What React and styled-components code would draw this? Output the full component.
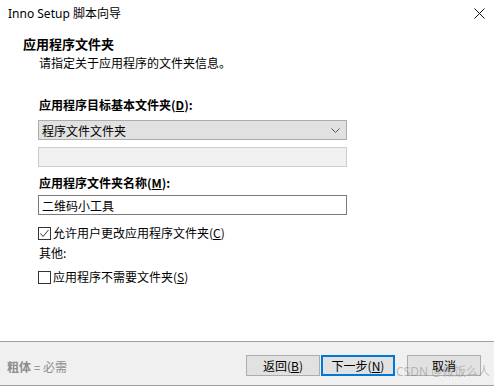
import React from 'react';
import styled, { createGlobalStyle } from 'styled-components';

const GlobalStyle = createGlobalStyle`
  html, body { margin: 0; padding: 0; background: #fff; }
  body {
    font-family: 'Noto Sans', 'Noto Sans CJK SC', sans-serif;
    font-size: 12px;
    color: #000;
  }
`;

const Window = styled.div`
  width: 494px;
  height: 386px;
  display: flex;
  flex-direction: column;
  background: #fff;
  position: relative;
  overflow: hidden;
`;

const TitleBar = styled.div`
  height: 26px;
  display: flex;
  align-items: center;
  justify-content: space-between;
  padding: 0 9px 0 8px;
  font-size: 12px;
`;

const Header = styled.div`
  padding: 10px 0 0 23px;
  height: 52px;
`;

const HeaderTitle = styled.div`
  font-family: 'Noto Sans CJK SC', sans-serif;
  font-weight: 700;
  font-size: 13px;
  line-height: 16px;
`;

const HeaderSub = styled.div`
  font-family: 'Noto Sans CJK SC', sans-serif;
  font-size: 12px;
  line-height: 16px;
  margin: 3px 0 0 16px;
`;

const Body = styled.div`
  flex: 1;
  padding: 9px 0 0 38px;
  display: flex;
  flex-direction: column;
  font-family: 'Noto Sans CJK SC', sans-serif;
`;

const Label = styled.div`
  font-weight: ${({ bold }) => (bold ? 700 : 400)};
  font-size: 12px;
  line-height: 16px;
  margin: ${({ m }) => m || '0'};
  padding-left: 1px;
`;

const Key = styled.span`
  text-decoration: underline;
`;

const Field = styled.div`
  box-sizing: border-box;
  width: 309px;
  height: 20px;
  display: flex;
  align-items: center;
  justify-content: space-between;
  padding: 0 6px 0 3px;
  font-size: 12px;
  margin: ${({ m }) => m || '0'};
  background: ${({ kind }) =>
    kind === 'select' ? '#e1e1e1' : kind === 'disabled' ? '#f0f0f0' : '#fff'};
  border: 1px solid
    ${({ kind }) =>
      kind === 'select' ? '#adadad' : kind === 'disabled' ? '#cccccc' : '#7a7a7a'};
`;

const CheckRow = styled.label`
  display: flex;
  align-items: center;
  gap: 2px;
  line-height: 16px;
  margin: ${({ m }) => m || '0'};
`;

const Box = styled.span`
  box-sizing: border-box;
  width: 13px;
  height: 13px;
  border: 1px solid #333;
  background: #fff;
  display: inline-flex;
  align-items: center;
  justify-content: center;
`;

const Footer = styled.div`
  height: 45px;
  box-sizing: border-box;
  border-top: 1px solid #a0a0a0;
  border-bottom: 1px solid #a0a0a0;
  background: #f0f0f0;
  display: flex;
  align-items: center;
  padding: 0 13px 0 7px;
`;

const Hint = styled.div`
  flex: 1;
  color: #8d8d8d;
  font-family: 'Noto Sans CJK SC', sans-serif;
  font-size: 12px;
  padding-top: 6px;
  b { font-weight: 700; }
`;

const Button = styled.div`
  box-sizing: border-box;
  width: 74px;
  height: 21px;
  display: flex;
  align-items: center;
  justify-content: center;
  font-family: 'Noto Sans CJK SC', sans-serif;
  font-size: 12px;
  background: #e1e1e1;
  border: ${({ primary }) => (primary ? '2px solid #0078d7' : '1px solid #adadad')};
  margin-left: ${({ gap }) => gap || 0}px;
  margin-top: 3px;
`;

const Watermark = styled.div`
  position: absolute;
  left: 396px;
  top: 362px;
  font-family: 'Noto Sans', 'Noto Sans CJK SC', sans-serif;
  font-size: 12px;
  color: rgba(120, 120, 120, 0.45);
  pointer-events: none;
  white-space: nowrap;
`;

export default function App() {
  return (
    <Window>
      <GlobalStyle />
      <TitleBar>
        <span>Inno Setup 脚本向导</span>
        <svg width="11" height="11" viewBox="0 0 11 11">
          <path d="M0.5 0.5 L10.5 10.5 M10.5 0.5 L0.5 10.5" stroke="#111" strokeWidth="1" />
        </svg>
      </TitleBar>
      <Header>
        <HeaderTitle>应用程序文件夹</HeaderTitle>
        <HeaderSub>请指定关于应用程序的文件夹信息。</HeaderSub>
      </Header>
      <Body>
        <Label bold>
          应用程序目标基本文件夹(<Key>D</Key>):
        </Label>
        <Field kind="select" m="7px 0 0 0">
          <span>程序文件文件夹</span>
          <svg width="9" height="5" viewBox="0 0 9 5">
            <path d="M0.5 0.5 L4.5 4.5 L8.5 0.5" fill="none" stroke="#555" strokeWidth="1" />
          </svg>
        </Field>
        <Field kind="disabled" m="7px 0 0 0" />
        <Label bold m="8px 0 0 0">
          应用程序文件夹名称(<Key>M</Key>):
        </Label>
        <Field m="4px 0 0 0">二维码小工具</Field>
        <CheckRow m="10px 0 0 0">
          <Box>
            <svg width="11" height="11" viewBox="0 0 11 11">
              <path d="M1.5 5.5 L4 8.5 L9.5 2" fill="none" stroke="#333" strokeWidth="1" />
            </svg>
          </Box>
          <span>允许用户更改应用程序文件夹(<Key>C</Key>)</span>
        </CheckRow>
        <Label m="4px 0 0 0">其他:</Label>
        <CheckRow m="8px 0 0 0">
          <Box />
          <span>应用程序不需要文件夹(<Key>S</Key>)</span>
        </CheckRow>
      </Body>
      <Footer>
        <Hint>
          <b>粗体</b> = 必需
        </Hint>
        <Button>返回(<Key>B</Key>)</Button>
        <Button primary gap={1}>下一步(<Key>N</Key>)</Button>
        <Button gap={12}>取消</Button>
      </Footer>
      <Watermark>CSDN @做饭么人</Watermark>
    </Window>
  );
}
